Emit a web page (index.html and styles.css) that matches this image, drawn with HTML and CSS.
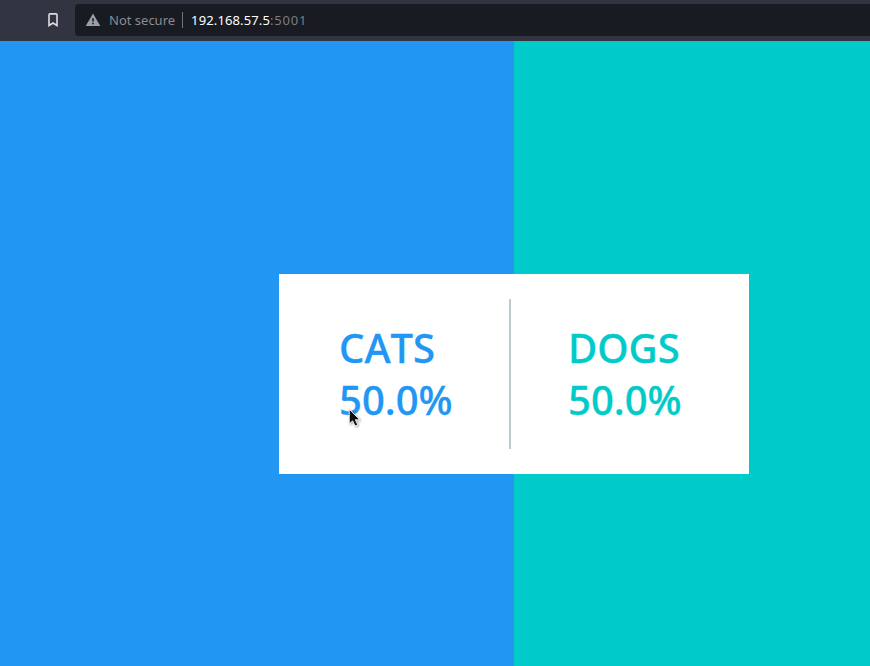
FILE: index.html
```
<!DOCTYPE html>
<html lang="en">
<head>
<meta charset="utf-8">
<title>Cats vs Dogs!</title>
<link rel="stylesheet" href="styles.css">
</head>
<body>
<header class="toolbar">
  <svg class="bookmark" width="12" height="16" viewBox="0 0 12 16"><path d="M2 2.8Q2 1.9 3 1.9H9Q10 1.9 10 2.8V13.5L6 11L2 13.5Z" fill="none" stroke="#dcdddf" stroke-width="1.6"/></svg>
  <div class="address">
    <svg class="warning" width="16" height="14" viewBox="0 0 16 14"><path d="M8 .5L15.3 13H.7Z" fill="#9b9ea7"/><path d="M7.2 5.2H8.8V8.6H7.2ZM7.2 9.7H8.8V11.2H7.2Z" fill="#181b21"/></svg>
    <span class="security">Not secure</span>
    <span class="separator"></span>
    <span class="url">192.168.57.5<span class="port">:5001</span></span>
  </div>
</header>
<main class="results">
  <section class="card">
    <div class="choice cats"><div>CATS</div><div>50.0%</div></div>
    <div class="divider"></div>
    <div class="choice dogs"><div>DOGS</div><div>50.0%</div></div>
  </section>
</main>
<svg class="cursor" width="15" height="22" viewBox="0 0 14 21"><path d="M1 1V15.2L4.2 12.3L6.6 17.3L9.2 16.1L6.9 11.3H11.2Z" fill="#111" stroke="#fff" stroke-width=".9"/></svg>
</body>
</html>
```

FILE: styles.css
```
* { box-sizing: border-box; }
body {
  margin: 0;
  height: 666px;
  overflow: hidden;
  display: flex;
  flex-direction: column;
  font-family: "Noto Sans", sans-serif;
}
.toolbar {
  height: 41px;
  flex: none;
  display: flex;
  align-items: flex-start;
  padding: 4px 0 0 47px;
  background: #323442;
}
.bookmark { margin: 8px 16px 0 0; }
.address {
  flex: 1;
  height: 32px;
  display: flex;
  align-items: center;
  padding-left: 10px;
  border-radius: 4px 0 0 4px;
  background: #181b21;
  font-size: 13px;
  line-height: 18px;
  white-space: nowrap;
}
.warning { margin-right: 8px; }
.security { color: #898c92; }
.separator { width: 1px; height: 16px; margin: 0 8px 0 7px; background: #6f7277; }
.url { color: #fff; letter-spacing: .13px; }
.port { color: #7b7d81; letter-spacing: .8px; }
.results {
  flex: 1;
  display: flex;
  align-items: flex-start;
  padding: 233px 0 0 279px;
  background: linear-gradient(to right, #2196f3 514px, #00cbca 514px);
}
.card {
  width: 470px;
  height: 200px;
  display: flex;
  align-items: center;
  padding-left: 60px;
  background: #fff;
}
.choice {
  width: 170px;
  font-size: 40px;
  font-weight: 500;
  font-kerning: none;
  line-height: 52px;
  -webkit-text-stroke: .3px currentColor;
}
.cats { color: #2196f3; }
.dogs { color: #00cbca; }
.divider { width: 2px; height: 150px; margin-right: 57px; background: #c0c9ce; }
.cursor { position: absolute; left: 348px; top: 408px; filter: drop-shadow(1px 1px 1px rgba(0, 0, 0, .35)); }
```
